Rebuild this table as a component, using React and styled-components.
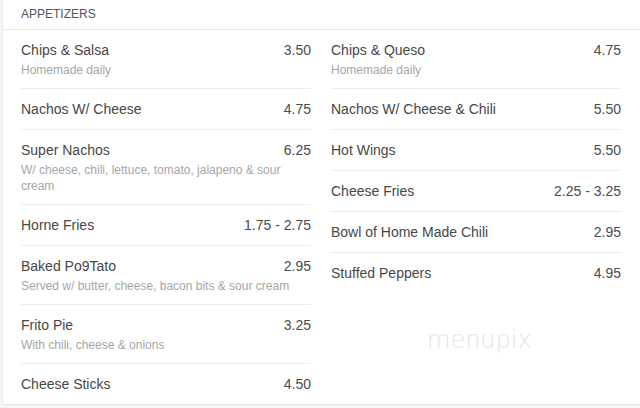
import React from 'react';
import styled, { createGlobalStyle } from 'styled-components';

const GlobalStyle = createGlobalStyle`
  html, body {
    margin: 0;
    padding: 0;
    background: #f5f5f6;
    overflow: hidden;
  }
  body {
    font-family: "Liberation Sans", Arial, sans-serif;
  }
`;

const Card = styled.div`
  position: relative;
  margin-left: 2px;
  background: #fff;
  border-left: 1px solid #e8e8e8;
  border-bottom: 1px solid #e4e4e6;
`;

const Header = styled.div`
  height: 29px;
  line-height: 29px;
  padding: 0 18px;
  font-size: 12px;
  color: #555;
  text-transform: uppercase;
  border-bottom: 1px solid #e9e9e9;
`;

const Columns = styled.div`
  display: grid;
  grid-template-columns: 290px 290px;
  column-gap: 20px;
  padding: 0 18px;
  align-items: start;
`;

const Column = styled.div`
  display: flex;
  flex-direction: column;
`;

const Item = styled.div`
  padding: 10px 0;
  border-bottom: 1px solid #ededed;

  &:last-child {
    border-bottom: none;
  }
`;

const Line = styled.div`
  display: flex;
  justify-content: space-between;
  font-size: 14px;
  line-height: 20px;
  color: #474747;
`;

const Price = styled.span`
  color: #4c4c4c;
  white-space: nowrap;
`;

const Desc = styled.div`
  margin-top: 2px;
  font-size: 12px;
  line-height: 16px;
  color: #a6a6a6;
`;

const Watermark = styled.div`
  position: absolute;
  left: 424px;
  top: 326px;
  font-family: "DejaVu Sans", sans-serif;
  font-weight: 200;
  font-size: 24px;
  color: #e4e4e4;
  pointer-events: none;
`;

const left = [
  { name: 'Chips & Salsa', price: '3.50', desc: 'Homemade daily' },
  { name: 'Nachos W/ Cheese', price: '4.75' },
  {
    name: 'Super Nachos',
    price: '6.25',
    desc: 'W/ cheese, chili, lettuce, tomato, jalapeno & sour cream',
  },
  { name: 'Horne Fries', price: '1.75 - 2.75' },
  {
    name: 'Baked Po9Tato',
    price: '2.95',
    desc: 'Served w/ butter, cheese, bacon bits & sour cream',
  },
  { name: 'Frito Pie', price: '3.25', desc: 'With chili, cheese & onions' },
  { name: 'Cheese Sticks', price: '4.50' },
];

const right = [
  { name: 'Chips & Queso', price: '4.75', desc: 'Homemade daily' },
  { name: 'Nachos W/ Cheese & Chili', price: '5.50' },
  { name: 'Hot Wings', price: '5.50' },
  { name: 'Cheese Fries', price: '2.25 - 3.25' },
  { name: 'Bowl of Home Made Chili', price: '2.95' },
  { name: 'Stuffed Peppers', price: '4.95' },
];

const MenuColumn = ({ items }) => (
  <Column>
    {items.map((item) => (
      <Item key={item.name}>
        <Line>
          <span>{item.name}</span>
          <Price>{item.price}</Price>
        </Line>
        {item.desc && <Desc>{item.desc}</Desc>}
      </Item>
    ))}
  </Column>
);

const App = () => {
  return (
    <>
      <GlobalStyle />
      <Card>
        <Header>Appetizers</Header>
        <Columns>
          <MenuColumn items={left} />
          <MenuColumn items={right} />
        </Columns>
        <Watermark>menupix</Watermark>
      </Card>
    </>
  );
};

export default App;
